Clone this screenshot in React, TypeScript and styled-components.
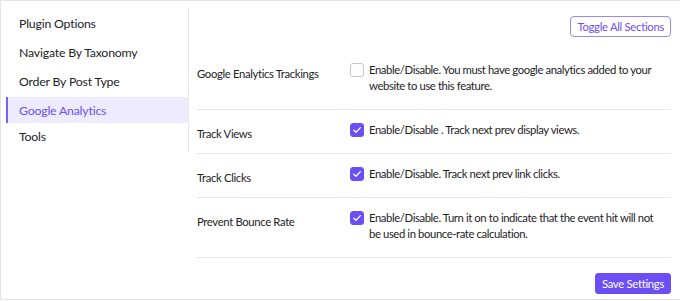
import * as React from 'react';
import styled, { createGlobalStyle } from 'styled-components';

const GlobalStyle = createGlobalStyle`
  html, body {
    margin: 0;
    padding: 0;
    background: #ffffff;
  }
  body {
    font-family: Lato, 'Noto Sans', Arial, sans-serif;
    color: #1d2327;
  }
  * {
    box-sizing: border-box;
  }
`;

const PURPLE = '#6c4ef6';

const Frame = styled.div`
  display: flex;
  align-items: flex-start;
  height: 300px;
  border: 1px solid #e4e4e4;
  border-right: none;
  padding-left: 5px;
  background: #fff;
  overflow: hidden;
`;

const Sidebar = styled.nav`
  width: 183px;
  margin-top: 7px;
  padding-top: 2px;
  border-right: 1px solid #e8e8e8;
  display: flex;
  flex-direction: column;
`;

const NavItem = styled.div<{ $active?: boolean }>`
  height: 26px;
  margin-bottom: ${({ $active }) => ($active ? '0' : '3px')};
  display: flex;
  align-items: center;
  padding-left: 11px;
  border-left: 2px solid ${({ $active }) => ($active ? '#7b5ff6' : 'transparent')};
  background: ${({ $active }) => ($active ? '#eeebfe' : 'transparent')};
  color: ${({ $active }) => ($active ? PURPLE : '#1d2327')};
  font-size: 12.3px;
  letter-spacing: -0.2px;
  white-space: nowrap;
`;

const Main = styled.main`
  flex: 1;
  padding: 15px 9px 0 8px;
  display: flex;
  flex-direction: column;
`;

const TopBar = styled.div`
  display: flex;
  justify-content: flex-end;
  margin-bottom: 13px;
`;

const OutlineButton = styled.button`
  height: 21px;
  padding: 0 6px;
  font-family: inherit;
  font-size: 11.3px;
  letter-spacing: -0.3px;
  color: ${PURPLE};
  background: #fff;
  border: 1px solid #9d86f8;
  border-radius: 4px;
  cursor: pointer;
`;

const SolidButton = styled.button`
  height: 21px;
  padding: 0 6px;
  font-family: inherit;
  font-size: 11.3px;
  letter-spacing: -0.3px;
  color: #fff;
  background: #6b4ef6;
  border: 1px solid #6b4ef6;
  border-radius: 3px;
  cursor: pointer;
`;

const Row = styled.div`
  display: grid;
  grid-template-columns: 153px 1fr;
  border-bottom: 1px solid #e6e6e6;
`;

const Label = styled.div`
  padding: 16px 0 11px;
  font-size: 11.3px;
  letter-spacing: -0.35px;
  line-height: 16px;
  color: #1d2327;
`;

const Field = styled.label`
  display: flex;
  align-items: flex-start;
  gap: 5px;
  padding: 12px 8px 15px 0;
  font-size: 11.3px;
  letter-spacing: -0.4px;
  line-height: 16px;
  color: #1d2327;
`;

const Box = styled.span<{ $checked?: boolean }>`
  flex: none;
  width: 14px;
  height: 14px;
  margin-top: 1px;
  border-radius: 3px;
  border: 1px solid ${({ $checked }) => ($checked ? '#6b4ef6' : '#c6c7ca')};
  background: ${({ $checked }) => ($checked ? '#6b4ef6' : '#fff')};
  display: flex;
  align-items: center;
  justify-content: center;
`;

const Footer = styled.div`
  display: flex;
  justify-content: flex-end;
  margin-top: 15px;
`;

function Checkbox({ checked }: { checked?: boolean }) {
  return (
    <Box $checked={checked}>
      {checked ? (
        <svg width="10" height="10" viewBox="0 0 10 10">
          <polyline points="1.8,5.2 4,7.3 8.4,2.6" fill="none" stroke="#fff" strokeWidth="1.3" strokeLinecap="round" strokeLinejoin="round" />
        </svg>
      ) : null}
    </Box>
  );
}

const navItems = ['Plugin Options', 'Navigate By Taxonomy', 'Order By Post Type', 'Google Analytics', 'Tools'];

const settings = [
  {
    label: 'Google Enalytics Trackings',
    text: 'Enable/Disable. You must have google analytics added to your website to use this feature.',
    checked: false,
  },
  { label: 'Track Views', text: 'Enable/Disable . Track next prev display views.', checked: true },
  { label: 'Track Clicks', text: 'Enable/Disable. Track next prev link clicks.', checked: true },
  {
    label: 'Prevent Bounce Rate',
    text: 'Enable/Disable. Turn it on to indicate that the event hit will not be used in bounce-rate calculation.',
    checked: true,
  },
];

export default function App() {
  return (
    <>
      <GlobalStyle />
      <Frame>
        <Sidebar>
          {navItems.map((item) => (
            <NavItem key={item} $active={item === 'Google Analytics'}>
              {item}
            </NavItem>
          ))}
        </Sidebar>
        <Main>
          <TopBar>
            <OutlineButton>Toggle All Sections</OutlineButton>
          </TopBar>
          {settings.map((s) => (
            <Row key={s.label}>
              <Label>{s.label}</Label>
              <Field>
                <Checkbox checked={s.checked} />
                <span>{s.text}</span>
              </Field>
            </Row>
          ))}
          <Footer>
            <SolidButton>Save Settings</SolidButton>
          </Footer>
        </Main>
      </Frame>
    </>
  );
}
